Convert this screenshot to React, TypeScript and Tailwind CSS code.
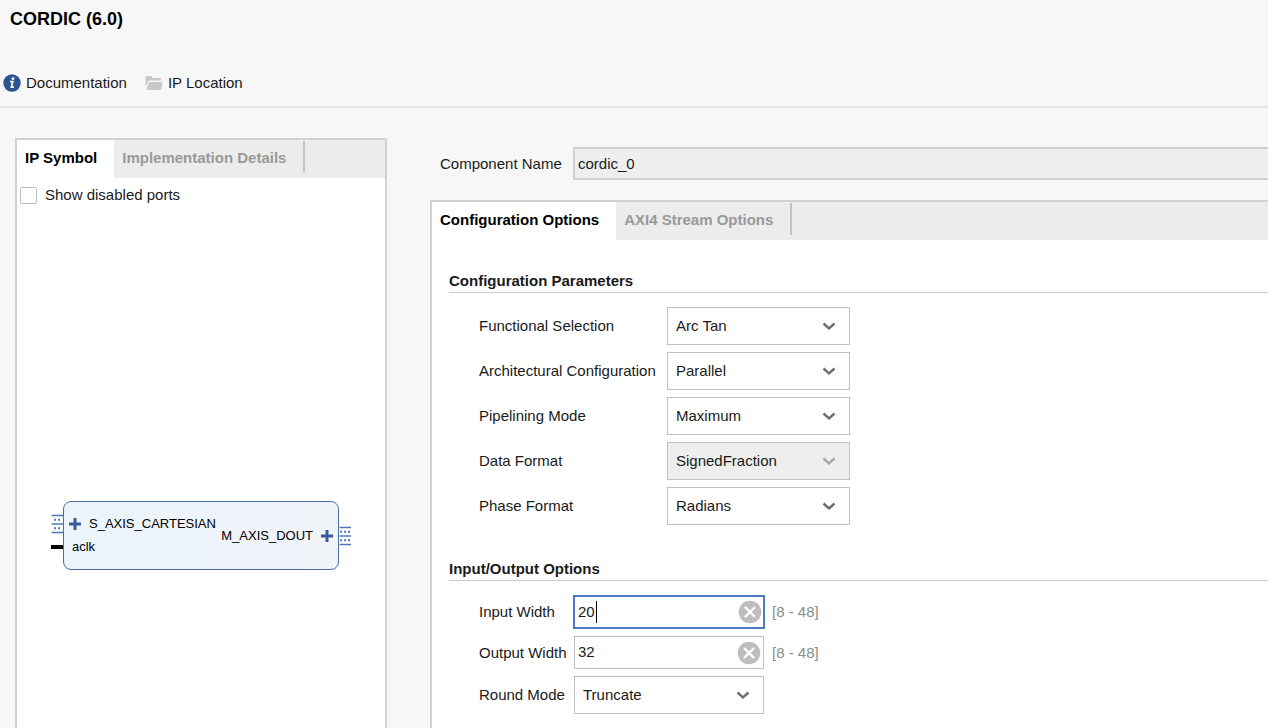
import { useState, type ReactNode } from 'react';

const parameters = [
  { id: 'functional', label: 'Functional Selection', options: ['Arc Tan', 'Rotate', 'Translate', 'Sin and Cos'] },
  { id: 'architecture', label: 'Architectural Configuration', options: ['Parallel', 'Word Serial'] },
  { id: 'pipelining', label: 'Pipelining Mode', options: ['Maximum', 'Optimal', 'No Pipelining'] },
  { id: 'data-format', label: 'Data Format', options: ['SignedFraction'], disabled: true },
  { id: 'phase-format', label: 'Phase Format', options: ['Radians', 'Scaled Radians'] },
];

function Tabs({ active, other }: { active: string; other: string }) {
  return (
    <div role="tablist" className="flex h-[38px] bg-[#ececec] font-bold">
      <button role="tab" aria-selected="true" className="bg-white pb-0.5 pl-2 pr-[17px] text-black">
        {active}
      </button>
      <button role="tab" aria-selected="false" className="pb-0.5 pl-2 pr-[17px] text-[#999999]">
        {other}
      </button>
      <span className="mt-px h-8 w-0.5 bg-[#c3c3c3]" />
    </div>
  );
}

function Select({ id, options, disabled = false }: { id: string; options: string[]; disabled?: boolean }) {
  return (
    <div className="relative h-[38px]">
      <select
        id={id}
        disabled={disabled}
        className="h-full w-full appearance-none border border-[#c0c0c0] bg-white pl-2 pr-10 text-[#1a1a1a] opacity-100 outline-none disabled:bg-[#eeeeee]"
      >
        {options.map((option) => (
          <option key={option}>{option}</option>
        ))}
      </select>
      <svg
        viewBox="0 0 14 10"
        className={`pointer-events-none absolute right-3.5 top-3.5 h-2.5 w-3.5 ${disabled ? 'text-[#a8a8a8]' : 'text-[#6e6e6e]'}`}
      >
        <path d="M1.5 2.5 L7 7.5 L12.5 2.5" fill="none" stroke="currentColor" strokeWidth="2.4" />
      </svg>
    </div>
  );
}

function WidthField({ id, label, initial, active = false }: { id: string; label: string; initial: string; active?: boolean }) {
  const [value, setValue] = useState(initial);

  return (
    <>
      <label htmlFor={id}>{label}</label>
      <div className={active ? 'relative h-[34px]' : 'relative mx-px h-[33px]'}>
        <input
          id={id}
          type="text"
          value={value}
          onChange={(e) => setValue(e.target.value)}
          className={
            active
              ? 'h-full w-full border-2 border-[#4f7ac7] bg-white pb-0.5 pl-[3px] pr-8 caret-transparent outline-none'
              : 'h-full w-full border border-[#c0c0c0] bg-white pb-0.5 pl-[3px] pr-8 outline-none'
          }
        />
        {active && <span className="absolute left-[23px] top-1.5 h-[22px] w-px bg-black" />}
        <button
          aria-label={`Clear ${label}`}
          onClick={() => setValue('')}
          className="absolute inset-y-0 right-[3px] flex items-center"
        >
          <svg viewBox="0 0 24 24" className="size-6">
            <circle cx="12" cy="12" r="11.3" fill="#bebebe" />
            <path d="M7 7 L17 17 M17 7 L7 17" stroke="#ffffff" strokeWidth="2.4" />
          </svg>
        </button>
      </div>
      <span className="pl-[7px] text-[#8c8c8c]">[8 - 48]</span>
    </>
  );
}

function Section({ title, children }: { title: string; children: ReactNode }) {
  return (
    <section>
      <h2 className="mb-3.5 border-b border-[#cccccc] pb-px font-bold text-[#1a1a1a]">{title}</h2>
      {children}
    </section>
  );
}

function BusPin({ dots }: { dots: string }) {
  return (
    <svg viewBox="0 0 12 20" className="h-5 w-3 shrink-0" stroke="#4d79b5" fill="none">
      <path d="M0.5 1.5 H12 M0.5 10 H12 M0.5 18.5 H12" strokeWidth="1.3" />
      <path d={dots} strokeWidth="2" strokeDasharray="2 2" />
    </svg>
  );
}

function Plus() {
  return (
    <svg viewBox="0 0 12 12" className="size-3 shrink-0">
      <path d="M6 0 V12 M0 6 H12" stroke="#3a5a98" strokeWidth="3" />
    </svg>
  );
}

function IpSymbol() {
  return (
    <div className="flex justify-center text-[13px] leading-5 text-black">
      {/* Slave side pins */}
      <div className="flex flex-col pt-[13px]">
        <BusPin dots="M3 5.8 H9 M3 14.2 H9" />
        <span className="mt-[11px] h-1 w-3 bg-black" />
      </div>
      <div className="flex h-[69px] w-[276px] justify-between rounded-lg border border-[#4a6ea5] bg-linear-to-r from-[#ebf4fc] to-[#f1f4f9] px-[5px]">
        <div className="pt-3">
          <div className="flex items-center gap-2">
            <Plus />
            S_AXIS_CARTESIAN
          </div>
          <div className="pl-[3px] pt-[3px]">aclk</div>
        </div>
        <div className="flex items-center gap-2">
          M_AXIS_DOUT
          <Plus />
        </div>
      </div>
      {/* Master side pin */}
      <div className="flex items-center">
        <BusPin dots="M1 5.8 H11 M1 14.2 H11" />
      </div>
    </div>
  );
}

export default function App() {
  return (
    <div className="flex min-h-screen flex-col overflow-x-hidden bg-[#f7f7f7] font-['Liberation_Sans',Arial,sans-serif] text-[15px] leading-5 text-[#1a1a1a]">
      <header className="border-b-2 border-[#e5e5e5] pb-[13px] pt-[7px]">
        <h1 className="pl-2.5 text-lg font-bold leading-6 text-black">CORDIC (6.0)</h1>
        <nav className="mt-[42px] flex gap-[18px] pl-[3px]">
          <a href="#documentation" className="flex items-center gap-[5px]">
            <svg viewBox="0 0 18 18" className="size-[18px]">
              <circle cx="9" cy="9" r="8.7" fill="#2d5490" />
              <circle cx="10" cy="4.7" r="1.4" fill="#ffffff" />
              <path d="M7 7.6 H9.8 L8.4 13.2 H10.8" fill="none" stroke="#ffffff" strokeWidth="1.7" />
            </svg>
            Documentation
          </a>
          <a href="#location" className="flex items-center gap-[5px]">
            <svg viewBox="0 0 18 16" className="h-4 w-[18px]" fill="#c8c8c8">
              <path d="M0.5 12 V2.5 Q0.5 1 2 1 H6 L8 3 H14.5 Q16 3 16 4.5 V5.5 H5 Q3.5 5.5 3 7 Z" />
              <path d="M5 7 H16.5 Q17.5 7 17.3 8 L16.5 13.8 Q16.2 15 15 15 H2.2 Q1.2 15 1.5 14 L3.8 8 Q4.2 7 5 7 Z" />
            </svg>
            IP Location
          </a>
        </nav>
      </header>

      <main className="flex flex-1 gap-[43px] pl-[15px]">
        {/* Symbol preview */}
        <aside className="mt-[30px] w-[372px] shrink-0 border-x-2 border-t-2 border-[#d2d2d2] bg-white">
          <Tabs active="IP Symbol" other="Implementation Details" />
          <label className="mb-[296px] ml-[3px] mt-[7px] flex items-center gap-2">
            <input
              type="checkbox"
              className="size-[17px] appearance-none rounded-xs border border-[#bdbdbd] bg-white checked:bg-[#4f7ac7]"
            />
            Show disabled ports
          </label>
          <IpSymbol />
        </aside>

        {/* Settings */}
        <div className="flex min-w-0 flex-1 flex-col pt-[39px]">
          <div className="mb-5 flex items-center pl-2.5">
            <label htmlFor="component-name" className="w-[133px] shrink-0">
              Component Name
            </label>
            <input
              id="component-name"
              type="text"
              readOnly
              value="cordic_0"
              className="h-[33px] min-w-0 flex-1 border-y-2 border-l-2 border-[#d0d0d0] bg-[#eeeeee] pl-[3px] outline-none"
            />
          </div>

          <div className="flex-1 border-l-2 border-t-2 border-[#d2d2d2] bg-white">
            <Tabs active="Configuration Options" other="AXI4 Stream Options" />
            <div className="flex flex-col gap-[34px] pl-[17px] pt-[31px]">
              <Section title="Configuration Parameters">
                <div className="grid grid-cols-[188px_183px] items-center gap-y-[7px] pl-[30px]">
                  {parameters.map((param) => (
                    <div key={param.id} className="contents">
                      <label htmlFor={param.id}>{param.label}</label>
                      <Select id={param.id} options={param.options} disabled={param.disabled} />
                    </div>
                  ))}
                </div>
              </Section>

              <Section title="Input/Output Options">
                <div className="grid grid-cols-[94px_192px_auto] items-center gap-y-[7px] pl-[30px]">
                  <WidthField id="input-width" label="Input Width" initial="20" active />
                  <WidthField id="output-width" label="Output Width" initial="32" />
                  <label htmlFor="round-mode">Round Mode</label>
                  <div className="mx-px">
                    <Select id="round-mode" options={['Truncate', 'Round Pos Inf', 'Nearest Even']} />
                  </div>
                </div>
              </Section>
            </div>
          </div>
        </div>
      </main>
    </div>
  );
}
